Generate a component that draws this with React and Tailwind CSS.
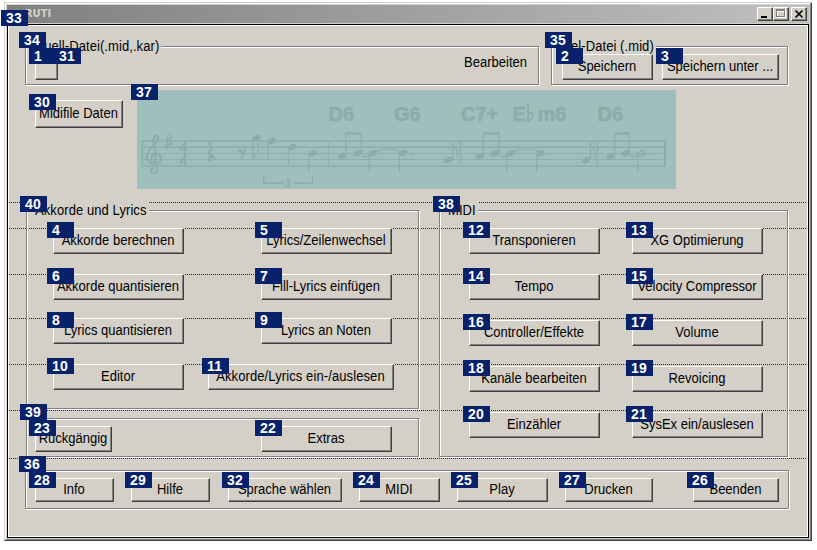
import React from "react";

function Badge({ n, className = "-left-[7px] -top-[7px]" }) {
  return (
    <span
      className={`absolute z-20 flex h-[16px] w-[27px] items-center bg-[#08216b] pl-[5px] text-[14px] leading-[16px] font-bold tracking-[0.2px] text-white ${className}`}
    >
      {n}
    </span>
  );
}

function Btn({ n, children, className = "h-[26px] w-[131px]" }) {
  return (
    <button
      className={`relative flex shrink-0 items-center justify-center border border-t-white border-l-white border-r-[#404040] border-b-[#404040] bg-[#d4d0c8] pr-[1px] whitespace-nowrap shadow-[inset_-1px_-1px_0_#808080] ${className}`}
    >
      <span className="inline-block scale-y-[1.08]">{children}</span>
      <Badge n={n} />
    </button>
  );
}

function Group({ n, title, className, inner = "", children }) {
  return (
    <section className={`relative shrink-0 pt-[8px] ${className}`}>
      <div
        className={`h-full border border-[#808080] shadow-[1px_1px_0_#fff,inset_1px_1px_0_#fff] ${inner}`}
      >
        {children}
      </div>
      {title && (
        <span className="absolute top-0 left-[7px] h-[16px] bg-[#d4d0c8] px-[2px] leading-[17px] tracking-[0.08px] whitespace-nowrap">
          <span className="inline-block scale-y-[1.08]">{title}</span>
        </span>
      )}
      <Badge n={n} className="-left-[6px] -top-[6px]" />
    </section>
  );
}

const Head = ({ x, y }) => (
  <ellipse cx={x} cy={y} rx="4.4" ry="2.8" transform={`rotate(-20 ${x} ${y})`} stroke="none" />
);
const Line = ({ d, w = 1 }) => <path d={d} fill="none" strokeWidth={w} />;

const heads = [
  [119.7, 47.7], [135, 51], [155.3, 57], [175.7, 63.3],
  [205.3, 66.3], [220.7, 63.3], [236, 63], [266, 63], [311.3, 70],
  [342.3, 66.7], [358, 63.3], [373.7, 63.3], [403.7, 63.3], [449, 70.3],
  [473.7, 66.7], [488.7, 63.3],
];

function Score() {
  return (
    <div className="relative h-[99px] w-[539px] bg-[#9fbfbd]">
      <svg
        width="539"
        height="99"
        viewBox="0 0 539 99"
        fill="#8caba9"
        stroke="#8caba9"
        fontFamily="Liberation Sans, Arial, sans-serif"
      >
        <Line d="M5 51H528M5 57.3H528M5 76H528" w={1.6} />
        <Line d="M5 63.5H528M5 69.5H528" w={0.9} />
        <Line d="M5 50.5V76.5M191.3 51V76M323.3 51V76M460.3 51V76" />
        <Line d="M528 50.2V76.8" w={2} />
        <Line
          d="M17 79C14 77 12 82 16 83.3C20 83.5 20.500 80 20 77L16.500 52C16 46 20 43 21 47C22 54 9.500 58 10 67C10.500 76 24 76 24 68.500C24 62 14 62 14.500 69C15 72 18 72.500 19 71"
          w={1.9}
        />
        <Line d="M30.500 45V60M33.500 43.500V58.500M28 50L36 47.500M28 56L36 53.500" w={1.3} />
        <Line d="M48 51V63M48 52L43.500 59.500H50M48 64V76M48 65L43.500 72.500H50" w={1.7} />
        <Line d="M71.500 53L75 58L72 62L76 67C71 65 71 69 74 71.500" w={2.1} />
        <Line d="M102.500 60.500C103 64 107 62 108.500 59L104.500 69" w={1.5} />
        <circle cx="102.800" cy="60.500" r="1.800" stroke="none" />
        {heads.map(([x, y]) => (
          <Head key={x} x={x} y={y} />
        ))}
        <Line d="M115.700 48V69M131.300 51V69.500M151.300 57V75M171.700 63V82.700" w={1.1} />
        <Line d="M116 68C118 63 124 61 121 53" w={1.2} />
        <Line d="M126.800 86V93H147M156 93H175.500V86" w={1.4} />
        <text x="147.500" y="97" fontSize="11" fontStyle="italic" fontWeight="bold" stroke="none">3</text>
        <Line d="M208.700 66V42.500M224.300 63V42.500M346.300 66V42.500M362.300 63V42.500M477.700 66V42.500M492 63V42.500" w={1.1} />
        <Line d="M208.200 43.400H224.800M345.800 43.400H362.800M477.200 43.400H492.500" w={2.400} />
        <Line d="M232.300 63V82.700M262.300 63V82.700M369.700 63V82.700M399.700 63V82.700M500.700 63V82.700" w={1.1} />
        <Line d="M225 65.500Q229 68.500 233 65M363 65.500Q367 68.500 371 65M493 65.500Q497 68 501 65" w={1.200} />
        <Line d="M238 61.500C245 58.500 257 58.500 265 61.500M376 61.500C383 58.500 395 58.500 402 61.500" w={1.200} />
        <Line d="M315.700 70V52.500C316 58 323 59 319.500 67M453.300 70V52.500C453.600 58 461 59 457 67" w={1.200} />
        <ellipse cx="504.700" cy="63.300" rx="4" ry="2.300" fill="none" strokeWidth="1.300" transform="rotate(-20 504.700 63.300)" />
        <circle cx="274.500" cy="64.700" r="1" stroke="none" />
        <circle cx="411.500" cy="64.200" r="1" stroke="none" />
        <circle cx="512.500" cy="64.200" r="1" stroke="none" />
        <g fontSize="20" fontWeight="bold" strokeWidth="0.5">
          <text x="191.500" y="30.500">D6</text>
          <text x="257" y="30.500">G6</text>
          <text x="324" y="30.500">C7+</text>
          <text x="375.500" y="30.500">E</text>
          <text x="400.500" y="30.500">m6</text>
          <text x="460.500" y="30.500">D6</text>
        </g>
        <Line d="M391 13.500V31.500C397 27 398.500 21 391 23.500" w={1.800} />
      </svg>
      <Badge n="37" className="-left-[6px] -top-[6px]" />
    </div>
  );
}

const caption =
  "flex h-[14px] w-[16px] items-center justify-center border border-t-white border-l-white border-r-[#404040] border-b-[#404040] bg-[#d4d0c8] shadow-[inset_-1px_-1px_0_#808080]";

function TitleBar() {
  return (
    <header className="relative flex h-[18px] items-center bg-gradient-to-r from-[#808080] to-[#c0c0c0] pr-[2px] pl-[18px]">
      <span className="grow font-['DejaVu_Sans_Condensed','DejaVu_Sans',sans-serif] text-[11px] leading-[18px] font-bold text-[#d4d0c8]">
        RUTI
      </span>
      <button className={caption}>
        <svg width="14" height="12">
          <path d="M3 8h6v2H3z" />
        </svg>
      </button>
      <button className={caption}>
        <svg width="14" height="12" fill="none" shapeRendering="crispEdges">
          <path d="M3.500 2.500h8v7h-8zM3.500 3.500h8" stroke="#fff" />
          <path d="M2.500 1.500h8v7h-8zM2.500 2.500h8" stroke="#808080" />
        </svg>
      </button>
      <button className={`ml-[2px] ${caption}`}>
        <svg width="14" height="12" fill="none">
          <path d="M3.500 2.500l7 7M10.500 2.500l-7 7" stroke="#000" strokeWidth="1.700" />
        </svg>
      </button>
      <Badge n="33" className="-left-[6px] top-[5px]" />
    </header>
  );
}

const guides = ["top-[176px]", "top-[202px]", "top-[248px]", "top-[292px]", "top-[338px]", "top-[384px]", "top-[432px]"];

const midiRows = [
  ["12", "Transponieren", "13", "XG Optimierung"],
  ["14", "Tempo", "15", "Velocity Compressor"],
  ["16", "Controller/Effekte", "17", "Volume"],
  ["18", "Kanäle bearbeiten", "19", "Revoicing"],
  ["20", "Einzähler", "21", "SysEx ein/auslesen"],
];

export default function App() {
  return (
    <div className="h-[550px] w-[817px] overflow-hidden bg-white pt-[2px] pl-[4px] font-['Liberation_Sans',Arial,sans-serif] text-[13px] leading-[16px] text-black">
      <div className="h-[539px] w-[808px] border border-t-[#d4d0c8] border-l-[#d4d0c8] border-r-[#404040] border-b-[#404040]">
        <div className="flex h-full flex-col border border-t-white border-l-white border-r-[#808080] border-b-[#808080] bg-[#d4d0c8] p-[1px]">
          <TitleBar />
          <div className="mt-[1px] grow border border-black">
            <main className="relative flex h-full flex-col border border-white">
              {guides.map((g) => (
                <div
                  key={g}
                  className={`absolute right-0 left-0 h-px bg-[repeating-linear-gradient(90deg,#1010e0_0_1px,#d4d0c8_1px_2px)] ${g}`}
                />
              ))}

              <div className="mt-[12px] flex gap-[12px] pl-[16px]">
                <Group n="34" title="Quell-Datei(.mid,.kar)" className="h-[47px] w-[514px]" inner="flex items-start pt-[7px] pl-[9px] pr-[11px]">
                  <Btn n="1" className="h-[26px] w-[23px]" />
                  <div className="relative ml-[3px] h-[26px]">
                    <Badge n="31" className="-left-[7px] -top-[6px]" />
                  </div>
                  <span className="ml-auto pt-[1px]">
                    <span className="inline-block scale-y-[1.08]">Bearbeiten</span>
                  </span>
                </Group>
                <Group n="35" title="Ziel-Datei (.mid)" className="h-[47px] w-[237px]" inner="flex gap-[9px] pt-[7px] pl-[10px]">
                  <Btn n="2" className="h-[26px] w-[91px]">Speichern</Btn>
                  <Btn n="3" className="h-[26px] w-[117px]">Speichern unter ...</Btn>
                </Group>
              </div>

              <div className="mt-[5px] flex items-start gap-[14px] pl-[26px]">
                <div className="pt-[10px]">
                  <Btn n="30" className="h-[28px] w-[88px]">Midifile Daten</Btn>
                </div>
                <Score />
              </div>

              <div className="mt-[13px] flex gap-[20px] pl-[17px]">
                <div className="flex flex-col gap-[1px]">
                  <Group n="40" title="Akkorde und Lyrics" className="h-[207px] w-[393px]" inner="flex flex-col pt-[17px] pl-[26px]">
                    <div className="flex gap-[77px]">
                      <Btn n="4">Akkorde berechnen</Btn>
                      <Btn n="5">Lyrics/Zeilenwechsel</Btn>
                    </div>
                    <div className="mt-[20px] flex gap-[77px]">
                      <Btn n="6">Akkorde quantisieren</Btn>
                      <Btn n="7">Fill-Lyrics einfügen</Btn>
                    </div>
                    <div className="mt-[18px] flex gap-[77px]">
                      <Btn n="8">Lyrics quantisieren</Btn>
                      <Btn n="9">Lyrics an Noten</Btn>
                    </div>
                    <div className="mt-[20px] flex gap-[24px]">
                      <Btn n="10">Editor</Btn>
                      <Btn n="11" className="h-[26px] w-[186px] tracking-[0.1px]">Akkorde/Lyrics ein-/auslesen</Btn>
                    </div>
                  </Group>
                  <Group n="39" className="h-[47px] w-[393px]" inner="flex gap-[149px] pt-[7px] pl-[8px]">
                    <Btn n="23" className="h-[26px] w-[77px]">Rückgängig</Btn>
                    <Btn n="22">Extras</Btn>
                  </Group>
                </div>
                <Group n="38" title="MIDI" className="h-[255px] w-[349px]" inner="flex flex-col gap-[20px] pt-[17px] pl-[29px]">
                  {midiRows.map(([a, ta, b, tb]) => (
                    <div key={a} className="flex gap-[32px]">
                      <Btn n={a}>{ta}</Btn>
                      <Btn n={b}>{tb}</Btn>
                    </div>
                  ))}
                </Group>
              </div>

              <div className="mt-[5px] pl-[16px]">
                <Group n="36" className="h-[47px] w-[764px]" inner="flex pt-[7px] pl-[9px]">
                  <Btn n="28" className="h-[24px] w-[79px]">Info</Btn>
                  <Btn n="29" className="ml-[17px] h-[24px] w-[79px]">Hilfe</Btn>
                  <Btn n="32" className="ml-[18px] h-[24px] w-[114px]">Sprache wählen</Btn>
                  <Btn n="24" className="ml-[17px] h-[24px] w-[81px]">MIDI</Btn>
                  <Btn n="25" className="ml-[17px] h-[24px] w-[91px]">Play</Btn>
                  <Btn n="27" className="ml-[17px] h-[24px] w-[88px]">Drucken</Btn>
                  <Btn n="26" className="ml-[40px] h-[24px] w-[86px]">Beenden</Btn>
                </Group>
              </div>
            </main>
          </div>
        </div>
      </div>
    </div>
  );
}
